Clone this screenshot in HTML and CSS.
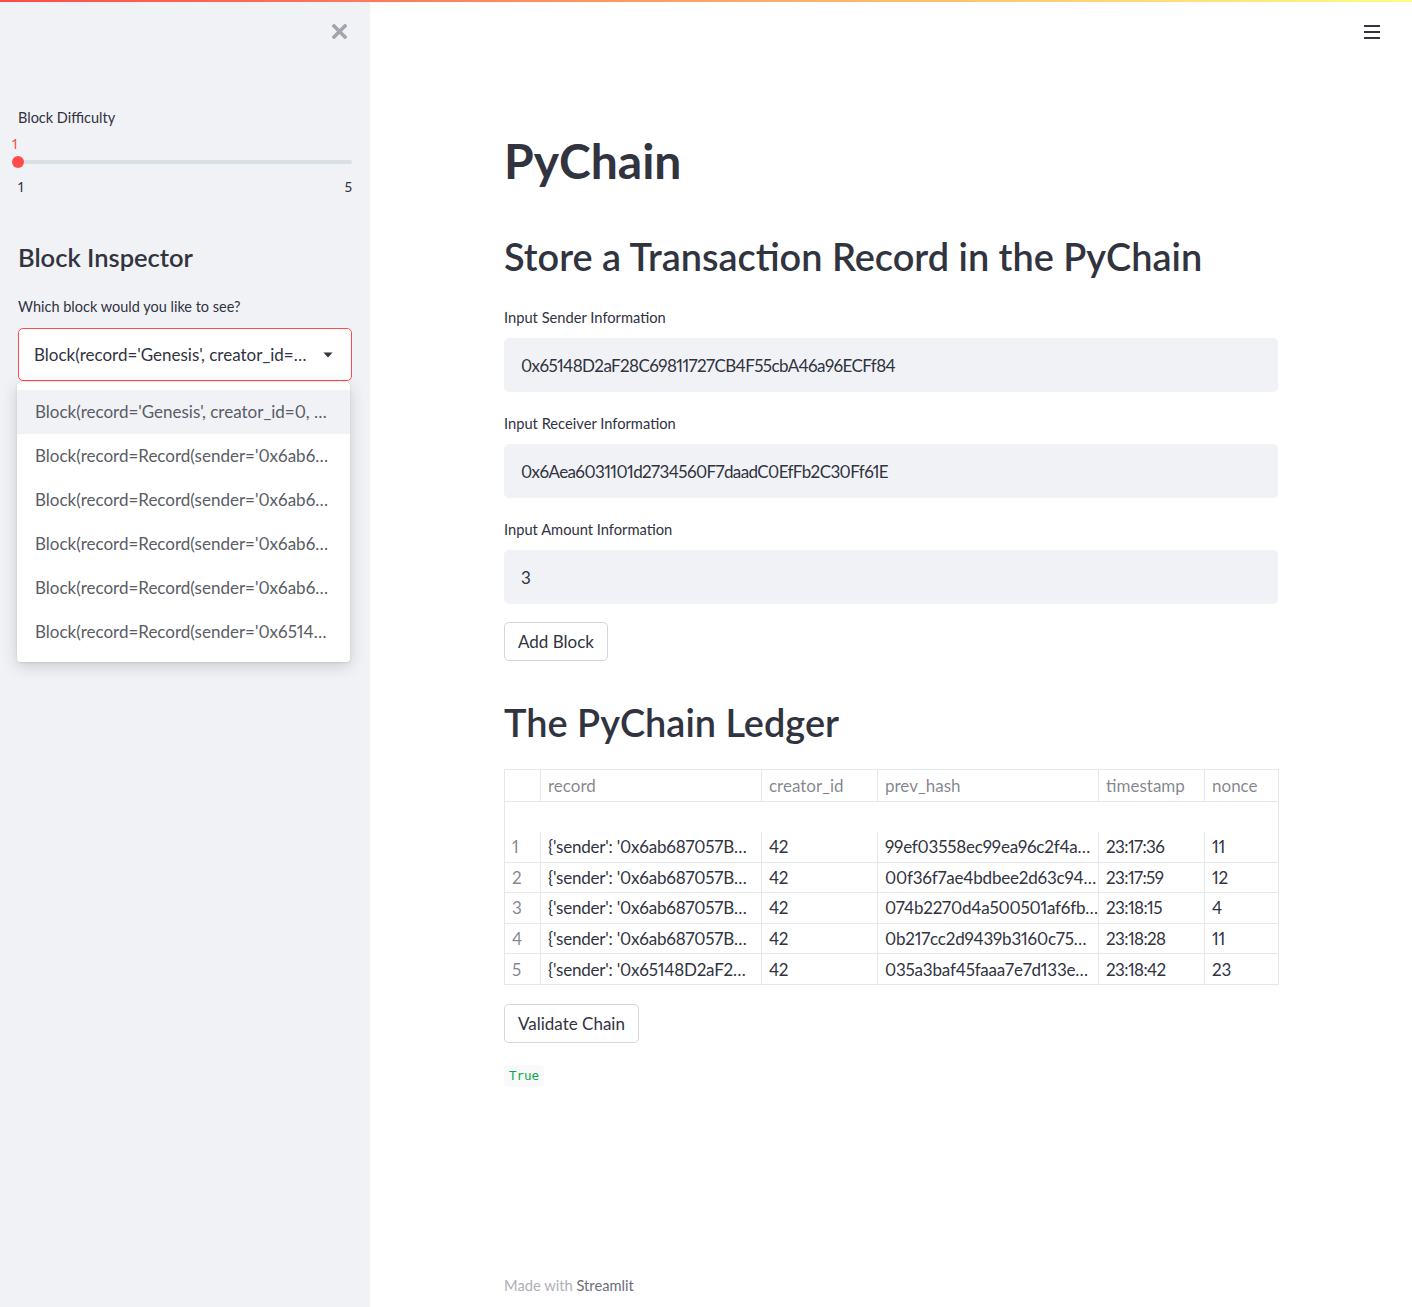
FILE: index.html
```html
<!DOCTYPE html>
<html lang="en">
<head>
<meta charset="utf-8">
<title>PyChain</title>
<link rel="stylesheet" href="styles.css">
</head>
<body>
<div class="topbar"></div>
<div class="app">
  <aside class="sidebar">
    <div class="close-row">
      <svg class="close-icon" width="15" height="15" viewBox="0 0 15 15"><path d="M2 2 L13 13 M13 2 L2 13" stroke="#a3a5ae" stroke-width="3.6" stroke-linecap="square" fill="none"/></svg>
    </div>
    <div class="side-label first-label">Block Difficulty</div>
    <div class="slider">
      <div class="slider-value">1</div>
      <div class="slider-track-row">
        <div class="slider-track"></div>
        <div class="slider-thumb"></div>
      </div>
      <div class="slider-ticks"><span>1</span><span>5</span></div>
    </div>
    <h2 class="side-heading">Block Inspector</h2>
    <div class="side-label select-label">Which block would you like to see?</div>
    <div class="select-wrap">
      <div class="select">
        <span class="select-text">Block(record='Genesis', creator_id=…</span>
        <svg class="select-arrow" width="10" height="6" viewBox="0 0 10 6"><path d="M0.5 0.5 L9.5 0.5 L5 5.5 Z" fill="#31333f"/></svg>
      </div>
      <ul class="menu">
        <li class="menu-item active">Block(record='Genesis', creator_id=0, …</li>
        <li class="menu-item">Block(record=Record(sender='0x6ab6…</li>
        <li class="menu-item">Block(record=Record(sender='0x6ab6…</li>
        <li class="menu-item">Block(record=Record(sender='0x6ab6…</li>
        <li class="menu-item">Block(record=Record(sender='0x6ab6…</li>
        <li class="menu-item">Block(record=Record(sender='0x6514…</li>
      </ul>
    </div>
  </aside>
  <main class="main">
    <div class="hamburger"><span></span><span></span><span></span></div>
    <div class="content">
      <h1 class="title">PyChain</h1>
      <h2 class="heading h-store">Store a Transaction Record in the PyChain</h2>
      <div class="field field-first">
        <div class="label">Input Sender Information</div>
        <div class="input hex">0x65148D2aF28C69811727CB4F55cbA46a96ECFf84</div>
      </div>
      <div class="field">
        <div class="label">Input Receiver Information</div>
        <div class="input hex">0x6Aea6031101d2734560F7daadC0EfFb2C30Ff61E</div>
      </div>
      <div class="field">
        <div class="label">Input Amount Information</div>
        <div class="input">3</div>
      </div>
      <div class="btn-row btn-add"><button class="btn">Add Block</button></div>
      <h2 class="heading h-ledger">The PyChain Ledger</h2>
      <table class="ledger">
        <colgroup>
          <col class="c-idx"><col class="c-rec"><col class="c-cre"><col class="c-prev"><col class="c-ts"><col class="c-non">
        </colgroup>
        <thead>
          <tr class="hdr"><th></th><th>record</th><th>creator_id</th><th>prev_hash</th><th>timestamp</th><th>nonce</th></tr>
          <tr class="blank"><th></th><th></th><th></th><th></th><th></th><th></th></tr>
        </thead>
        <tbody>
          <tr class="first-row"><td class="idx">1</td><td>{'sender': '0x6ab687057B…</td><td>42</td><td class="hash">99ef03558ec99ea96c2f4a…</td><td class="num">23:17:36</td><td>11</td></tr>
          <tr><td class="idx">2</td><td>{'sender': '0x6ab687057B…</td><td>42</td><td class="hash">00f36f7ae4bdbee2d63c94…</td><td class="num">23:17:59</td><td>12</td></tr>
          <tr><td class="idx">3</td><td>{'sender': '0x6ab687057B…</td><td>42</td><td class="hash">074b2270d4a500501af6fb…</td><td class="num">23:18:15</td><td>4</td></tr>
          <tr><td class="idx">4</td><td>{'sender': '0x6ab687057B…</td><td>42</td><td class="hash">0b217cc2d9439b3160c75…</td><td class="num">23:18:28</td><td>11</td></tr>
          <tr><td class="idx">5</td><td>{'sender': '0x65148D2aF2…</td><td>42</td><td class="hash">035a3baf45faaa7e7d133e…</td><td class="num">23:18:42</td><td>23</td></tr>
        </tbody>
      </table>
      <div class="btn-row btn-validate"><button class="btn">Validate Chain</button></div>
      <div class="result"><code class="code">True</code></div>
      <footer class="footer">Made with <span class="footer-link">Streamlit</span></footer>
    </div>
  </main>
</div>
</body>
</html>
```

FILE: styles.css
```css
* { box-sizing: border-box; }
html, body { margin: 0; padding: 0; }
body {
  font-family: "Lato", "Noto Sans", sans-serif;
  font-variant-numeric: proportional-nums;
  color: #31333f;
  background: #ffffff;
  width: 1412px;
  height: 1307px;
  overflow: hidden;
}
.topbar {
  position: fixed;
  top: 0; left: 0; right: 0;
  height: 2px;
  background: linear-gradient(90deg, rgb(255,75,75), rgb(255,253,128));
  z-index: 10;
}
.app { display: flex; height: 1307px; }

/* Sidebar */
.sidebar {
  width: 370px;
  flex: 0 0 370px;
  background: #f0f2f6;
  padding: 0 18px;
}
.close-row {
  height: 62px;
  display: flex;
  justify-content: flex-end;
  align-items: center;
  padding-right: 5px;
}
.side-label {
  font-size: 14.5px;
  line-height: 20px;
}
.first-label { margin-top: 46px; }
.slider { margin-top: 6px; }
.slider-value {
  color: rgb(255,75,75);
  font-size: 14px;
  line-height: 20px;
  margin-left: -6px;
}
.slider-track-row {
  position: relative;
  height: 16px;
  display: flex;
  align-items: center;
}
.slider-track {
  flex: 1;
  height: 4px;
  border-radius: 2px;
  background: #dadee7;
}
.slider-thumb {
  position: absolute;
  left: -6px;
  top: 2px;
  width: 12px;
  height: 12px;
  border-radius: 50%;
  background: rgb(255,75,75);
}
.slider-ticks {
  margin-top: 7px;
  display: flex;
  justify-content: space-between;
  font-size: 14px;
  line-height: 20px;
}
.side-heading {
  margin: 43px 0 0;
  font-size: 25.5px;
  line-height: 34px;
  font-weight: 600;
}
.select-label { margin-top: 23px; }
.select-wrap { position: relative; margin-top: 11px; }
.select {
  height: 53px;
  border: 1px solid rgb(255,75,75);
  border-radius: 5px;
  background: #fff;
  display: flex;
  align-items: center;
  padding: 0 18px 0 15px;
  font-size: 17px;
}
.select-text { flex: 1; white-space: nowrap; overflow: hidden; }
.select-arrow { flex: 0 0 auto; margin-left: 12px; }
.menu {
  position: absolute;
  top: 54px;
  left: -1px;
  right: 2px;
  margin: 0;
  padding: 8px 0;
  list-style: none;
  background: #fff;
  border-radius: 4px;
  box-shadow: 0 4px 16px rgba(0,0,0,0.16), 0 1px 3px rgba(0,0,0,0.08);
  z-index: 5;
}
.menu-item {
  height: 44px;
  line-height: 44px;
  padding: 0 18px;
  font-size: 17px;
  color: #5a5c66;
  white-space: nowrap;
  overflow: hidden;
}
.menu-item.active { background: #f0f2f6; }

/* Main */
.main { flex: 1; position: relative; }
.hamburger {
  position: absolute;
  top: 25px;
  right: 32px;
  width: 16px;
  display: flex;
  flex-direction: column;
  gap: 4px;
}
.hamburger span { display: block; height: 2px; background: #31333f; }
.content {
  width: 774px;
  margin: 0 auto;
  padding-top: 131px;
}
.title {
  margin: 0;
  font-size: 48px;
  line-height: 60px;
  font-weight: 700;
}
.heading {
  margin: 0;
  font-size: 37.9px;
  line-height: 50px;
  font-weight: 600;
}
.h-store { margin-top: 41px; }
.field { margin-top: 21px; }
.field-first { margin-top: 25px; }
.label {
  font-size: 14.7px;
  line-height: 20px;
  margin-bottom: 11px;
}
.input {
  height: 54px;
  background: #f0f2f6;
  border-radius: 5px;
  padding: 0 17px;
  display: flex;
  align-items: center;
  font-size: 17px;
}
.input.hex { letter-spacing: -0.6px; }
.btn-row { display: flex; }
.btn-add { margin-top: 18px; }
.btn {
  font-family: inherit;
  font-size: 17px;
  color: #31333f;
  background: #fff;
  border: 1px solid rgba(49,51,63,0.2);
  border-radius: 5px;
  height: 39px;
  padding: 0 13px;
  line-height: 1;
}
.h-ledger { margin-top: 37px; }
.ledger {
  margin-top: 21px;
  width: 774px;
  table-layout: fixed;
  border-collapse: collapse;
  border: 1px solid #e6e7ea;
  font-size: 17px;
}
.c-idx { width: 36px; }
.c-rec { width: 221px; }
.c-cre { width: 116px; }
.c-prev { width: 221px; }
.c-ts { width: 106px; }
.c-non { width: 74px; }
.ledger th, .ledger td {
  border: 1px solid #e6e7ea;
  padding: 0 7px;
  text-align: left;
  white-space: nowrap;
  overflow: hidden;
  font-weight: 400;
}
.ledger th { color: rgba(49,51,63,0.6); }
.ledger .hdr { height: 32px; }
.ledger .blank { height: 30px; }
.ledger .blank th { border-left: none; border-right: none; border-bottom: none; }
.ledger tbody tr { height: 30.6px; }
.ledger .first-row td { border-top: none; }
.ledger td { letter-spacing: -0.2px; }
.ledger td.idx { color: rgba(49,51,63,0.6); }
.ledger td.hash { letter-spacing: -0.2px; }
.ledger td.num { letter-spacing: -0.6px; }
.btn-validate { margin-top: 19px; }
.result { margin-top: 22px; display: flex; }
.code {
  font-family: "DejaVu Sans Mono", "Liberation Mono", monospace;
  font-size: 12.5px;
  line-height: 22px;
  color: rgb(9,171,59);
  background: #f8f9fb;
  border-radius: 4px;
  padding: 0 5px;
}
.footer {
  margin-top: 188px;
  font-size: 14.7px;
  line-height: 20px;
  color: #aeb0b8;
}
.footer-link { color: #6b6e79; }
```
